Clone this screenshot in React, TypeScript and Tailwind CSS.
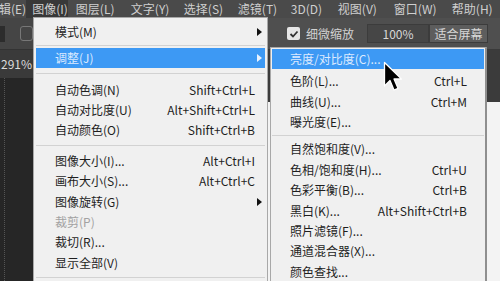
import React from "react";

const font = { fontFamily: '"Noto Sans CJK SC", "Noto Sans", sans-serif' };

type Item =
  | { sep: true }
  | { label: string; shortcut?: string; arrow?: boolean; active?: boolean; disabled?: boolean };

const mainItems: Item[] = [
  { label: "模式(M)", arrow: true },
  { sep: true },
  { label: "调整(J)", arrow: true, active: true },
  { sep: true },
  { label: "自动色调(N)", shortcut: "Shift+Ctrl+L" },
  { label: "自动对比度(U)", shortcut: "Alt+Shift+Ctrl+L" },
  { label: "自动颜色(O)", shortcut: "Shift+Ctrl+B" },
  { sep: true },
  { label: "图像大小(I)...", shortcut: "Alt+Ctrl+I" },
  { label: "画布大小(S)...", shortcut: "Alt+Ctrl+C" },
  { label: "图像旋转(G)", arrow: true },
  { label: "裁剪(P)", disabled: true },
  { label: "裁切(R)..." },
  { label: "显示全部(V)" },
  { sep: true },
];

const subItems: Item[] = [
  { label: "亮度/对比度(C)...", active: true },
  { label: "色阶(L)...", shortcut: "Ctrl+L" },
  { label: "曲线(U)...", shortcut: "Ctrl+M" },
  { label: "曝光度(E)..." },
  { sep: true },
  { label: "自然饱和度(V)..." },
  { label: "色相/饱和度(H)...", shortcut: "Ctrl+U" },
  { label: "色彩平衡(B)...", shortcut: "Ctrl+B" },
  { label: "黑白(K)...", shortcut: "Alt+Shift+Ctrl+B" },
  { label: "照片滤镜(F)..." },
  { label: "通道混合器(X)..." },
  { label: "颜色查找..." },
];

function Arrow({ light }: { light?: boolean }) {
  return (
    <svg width="5" height="8" viewBox="0 0 5 8" className="shrink-0">
      <path d="M0 0 L5 4 L0 8 Z" fill={light ? "#e8f2ff" : "#111"} />
    </svg>
  );
}

export default function App() {
  const menuTop = [
    { t: "图层(L)", w: "w-[55px]" },
    { t: "文字(Y)", w: "w-[53px]" },
    { t: "选择(S)", w: "w-[54px]" },
    { t: "滤镜(T)", w: "w-[53px]" },
    { t: "3D(D)", w: "w-[47px]" },
    { t: "视图(V)", w: "w-[56px]" },
    { t: "窗口(W)", w: "w-[58px]" },
    { t: "帮助(H)", w: "w-[60px]" },
  ];
  return (
    <div
      className="relative w-[500px] h-[281px] overflow-hidden bg-[#262626] text-[12px] leading-none flex flex-col"
      style={font}
    >
      {/* menu bar */}
      <div className="h-[18px] shrink-0 flex items-stretch bg-[#4a4a4a] text-[#cfcfcf] whitespace-nowrap">
        <div className="w-[34px] flex items-center -ml-[1px]">辑(E)</div>
        <div className="w-[48px] flex items-center pl-[6px] bg-[#383838]">图像(I)</div>
        {menuTop.map((m) => (
          <div key={m.t} className={`${m.w} shrink-0 flex items-center pl-[8px]`}>
            {m.t}
          </div>
        ))}
      </div>

      {/* body */}
      <div className="flex-1 flex">
        {/* left column */}
        <div className="w-[33px] shrink-0 flex flex-col">
          <div className="h-[32px] bg-[#454545] flex items-center gap-[15px] border-b border-[#333]">
            <div className="w-[6px] h-[16px] bg-[#2c2c2c]" />
            <div className="w-[14px] h-[15px] rounded-[3px] border border-[#777]" />
          </div>
          <div className="h-[28px] bg-[#3a3a3a] flex items-center text-[#dcdcdc] text-[12px] pl-[1px]">
            291%
          </div>
          <div className="flex-1 bg-[#262626] pl-[4px]">
            <div className="h-full border-l border-dotted border-[#555]" />
          </div>
        </div>

        {/* right area */}
        <div className="flex-1 flex flex-col">
          <div className="h-[32px] bg-[#4f4f4f] flex items-center pl-[254px] border-b border-[#3a3a3a]">
            <div className="w-[13px] h-[13px] bg-[#e6e6e6] rounded-[2px] flex items-center justify-center">
              <svg width="10" height="10" viewBox="0 0 10 10">
                <path d="M1.5 5 L4 7.5 L8.5 2.5" stroke="#333" strokeWidth="1.8" fill="none" />
              </svg>
            </div>
            <div className="ml-[6px] text-[#d2d2d2] w-[58px]">细微缩放</div>
            <div className="ml-[3px] w-[62px] h-[19px] border border-[#3c3c3c] bg-[#464646] flex items-center justify-center text-[#d8d8d8]">
              100%
            </div>
            <div className="w-[59px] h-[19px] bg-[#5d5d5d] border border-[#3c3c3c] flex items-center justify-center text-[#d8d8d8]">
              适合屏幕
            </div>
          </div>
          <div className="h-[52px] bg-[#3b3b3b]" />
          <div className="flex-1 bg-[#f3f3f3]" />
        </div>
      </div>

      {/* main dropdown */}
      <div className="absolute left-[33px] top-[17px] w-[235px] h-[270px] bg-[#f0f0f0] border border-[#a8a8a8] pt-[4px] px-[2px] text-[#1e1e1e]">
        {mainItems.map((it, i) =>
          "sep" in it ? (
            <div key={i} className={i === 1 ? "h-[6px] flex items-center" : i === 3 ? "h-[11px] flex items-center" : "h-[10px] flex items-center"}>
              <div className="w-full border-t border-[#d2d2d2]" />
            </div>
          ) : (
            <div
              key={i}
              className={`flex items-center pl-[19px] pr-[3px] ${it.active ? "h-[20px] bg-[#3d99f4] text-[#dceaff]" : "h-[20.4px]"} ${
                it.disabled ? "text-[#a2a2a2]" : ""
              }`}
            >
              <span className="flex-1">{it.label}</span>
              {it.shortcut && <span className="mr-[7px]">{it.shortcut}</span>}
              {it.arrow && <Arrow light={it.active} />}
            </div>
          )
        )}
      </div>

      {/* submenu */}
      <div className="absolute left-[270px] top-[47px] w-[217px] h-[240px] bg-[#f0f0f0] border border-[#a8a8a8] border-r-2 border-r-[#8f8f8f] pt-[1px] px-[1px] text-[#1e1e1e]">
        {subItems.map((it, i) =>
          "sep" in it ? (
            <div key={i} className="h-[7px] flex items-center">
              <div className="w-full border-t border-[#d2d2d2]" />
            </div>
          ) : (
            <div
              key={i}
              className={`flex items-center pl-[18px] pr-[17px] ${it.active ? "h-[20px] mb-[2px] bg-[#3d99f4] text-[#dceaff]" : "h-[20.4px]"}`}
            >
              <span className="flex-1">{it.label}</span>
              {it.shortcut && <span>{it.shortcut}</span>}
            </div>
          )
        )}
      </div>

      {/* cursor */}
      <svg className="absolute left-[383px] top-[61px]" width="22" height="34" viewBox="0 0 22 34">
        <path
          d="M1.5 1.5 L1.5 25 L7 19.5 L11 29 L15 27.3 L11 18 L18.5 18 Z"
          fill="#000"
          stroke="#fff"
          strokeWidth="1.3"
          strokeLinejoin="round"
        />
      </svg>
    </div>
  );
}
